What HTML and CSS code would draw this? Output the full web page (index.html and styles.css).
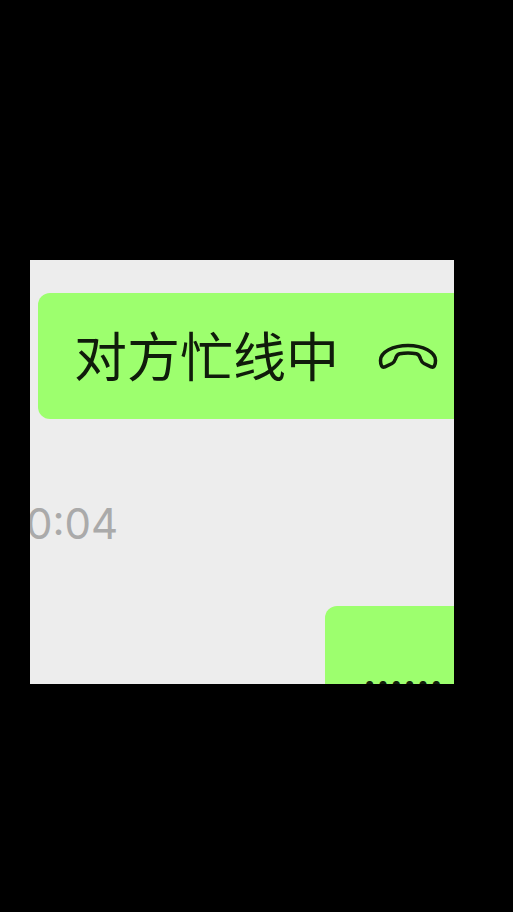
FILE: index.html
```html
<!DOCTYPE html>
<html lang="zh-CN">
<head>
<meta charset="utf-8">
<meta name="viewport" content="width=device-width, initial-scale=1">
<title>聊天</title>
<link rel="stylesheet" href="styles.css">
</head>
<body>
<main class="chat">
  <div class="bubble call">
    <span>对方忙线中</span>
    <svg class="phone" viewBox="0 0 60 28" aria-hidden="true">
      <path d="M2.500 18.500C2.500 10 15 3.500 30 3.500s27.500 6.500 27.500 15c0 5-1.500 7.500-4.500 6.300l-7-3.300c-2-1-2.600-2-3.400-4.500-1-3.500-2-4.700-4.200-5.200-5-1-11.800-1-16.800 0-2.200.5-3.200 1.700-4.200 5.200-.8 2.500-1.400 3.500-3.400 4.500l-7 3.300c-3 1.200-4.500-1.300-4.500-6.300z"/>
    </svg>
  </div>
  <time class="time">0:04</time>
  <div class="bubble dots">……</div>
</main>
</body>
</html>
```
FILE: styles.css
```css
* {
  box-sizing: border-box;
}

body {
  margin: 0;
  min-height: 100vh;
  padding: 260px 59px 228px 30px;
  background: #000;
  font-family: "Liberation Sans", "Noto Sans CJK SC", sans-serif;
}

.chat {
  display: flex;
  flex-direction: column;
  aspect-ratio: 1;
  padding: 33px 0 0 8px;
  overflow: hidden;
  background: #ededed;
}

.bubble {
  flex: none;
  background: #9dff6e;
  color: #101c0b;
  border-radius: 12px 0 0 12px;
}

.call {
  display: flex;
  align-items: center;
  gap: 39px;
  height: 126px;
  padding: 6px 0 0 36px;
  font-size: 53px;
  line-height: 72px;
  white-space: nowrap;
}

.phone {
  flex: none;
  width: 60px;
  height: 28px;
  margin-bottom: 6px;
  fill: none;
  stroke: currentColor;
  stroke-width: 3.500;
  stroke-linejoin: round;
}

.time {
  margin: 80px 0 0 -12px;
  color: #aaa;
  font-family: Inter, sans-serif;
  font-size: 42px;
  line-height: 50px;
}

.dots {
  align-self: flex-end;
  width: 129px;
  height: 130px;
  margin-top: 57px;
  padding: 52px 0 0 38px;
  font-family: "Noto Sans CJK SC", sans-serif;
  font-size: 40px;
  font-weight: 900;
  line-height: 50px;
}
```
